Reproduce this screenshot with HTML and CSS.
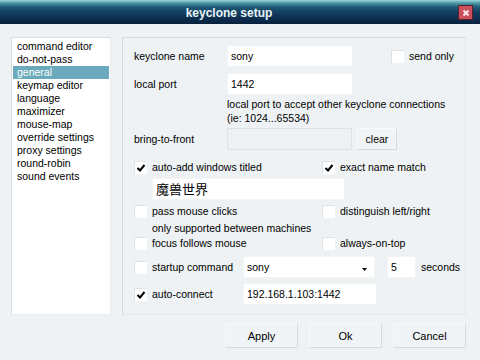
FILE: index.html
```html
<!DOCTYPE html>
<html>
<head>
<meta charset="utf-8">
<link rel="stylesheet" href="styles.css">
</head>
<body>
<div class="window">
  <div class="titlebar">
    <div class="title">keyclone setup</div>
    <div class="close"><svg width="8" height="8" viewBox="0 0 8 8"><path d="M1.5 1.5 L6.5 6.5 M6.5 1.5 L1.5 6.5" stroke="#ffe8ea" stroke-width="2"/></svg></div>
  </div>
  <div class="content">
    <div class="main">
      <ul class="list">
        <li>command editor</li>
        <li>do-not-pass</li>
        <li class="sel">general</li>
        <li>keymap editor</li>
        <li>language</li>
        <li>maximizer</li>
        <li>mouse-map</li>
        <li>override settings</li>
        <li>proxy settings</li>
        <li>round-robin</li>
        <li>sound events</li>
      </ul>
      <div class="panel">
        <div class="row r-name">
          <span class="label">keyclone name</span>
          <span class="input w126">sony</span>
          <span class="cb ml38"></span><span class="cbtext">send only</span>
        </div>
        <div class="row r-port">
          <span class="label">local port</span>
          <span class="input w126">1442</span>
        </div>
        <div class="help">local port to accept other keyclone connections<br>(ie: 1024...65534)</div>
        <div class="row r-front">
          <span class="label">bring-to-front</span>
          <span class="input disabled w125"></span>
          <span class="btn small">clear</span>
        </div>
        <div class="crow r-auto">
          <span class="half"><span class="cb"><svg class="tick" viewBox="0 0 10 10"><path d="M1.5 5 L4 7.5 L8.5 2" fill="none" stroke="#000" stroke-width="2"/></svg></span><span class="cbtext">auto-add windows titled</span></span>
          <span class="half2"><span class="cb"><svg class="tick" viewBox="0 0 10 10"><path d="M1.5 5 L4 7.5 L8.5 2" fill="none" stroke="#000" stroke-width="2"/></svg></span><span class="cbtext">exact name match</span></span>
        </div>
        <div class="row r-title">
          <span class="input wtitle">魔兽世界</span>
        </div>
        <div class="crow r-pass">
          <span class="half"><span class="cb"></span><span class="cbtext">pass mouse clicks</span></span>
          <span class="half2"><span class="cb"></span><span class="cbtext">distinguish left/right</span></span>
        </div>
        <div class="note">only supported between machines</div>
        <div class="crow r-focus">
          <span class="half"><span class="cb"></span><span class="cbtext">focus follows mouse</span></span>
          <span class="half2"><span class="cb"></span><span class="cbtext">always-on-top</span></span>
        </div>
        <div class="row r-startup">
          <span class="clabel"><span class="cb"></span><span class="cbtext">startup command</span></span>
          <span class="input select">sony<svg class="arrow" width="5" height="3" viewBox="0 0 5 3"><path d="M0 0 H5 L2.5 3 Z" fill="#000"/></svg></span>
          <span class="input secs">5</span>
          <span class="unit">seconds</span>
        </div>
        <div class="row r-connect">
          <span class="clabel"><span class="cb"><svg class="tick" viewBox="0 0 10 10"><path d="M1.5 5 L4 7.5 L8.5 2" fill="none" stroke="#000" stroke-width="2"/></svg></span><span class="cbtext">auto-connect</span></span>
          <span class="input addr">192.168.1.103:1442</span>
        </div>
      </div>
    </div>
    <div class="buttons">
      <span class="btn big">Apply</span>
      <span class="btn big">Ok</span>
      <span class="btn big">Cancel</span>
    </div>
  </div>
</div>
</body>
</html>
```
FILE: styles.css
```css
* { box-sizing: border-box; }
html, body { margin: 0; padding: 0; }
body {
  width: 480px; height: 360px; overflow: hidden;
  font-family: "Liberation Sans", Arial, sans-serif;
  font-size: 10.5px; color: #000;
  background: #eef2f4;
}
.window { width: 480px; height: 360px; display: flex; flex-direction: column; background: #eef2f4; overflow: hidden; }
.titlebar {
  height: 24px; display: flex; align-items: center; flex: none;
  background: linear-gradient(to bottom, #9ad8dc 0px, #4f99a8 3px, #1f5a76 7px, #133f60 12px, #0c2a4a 20px, #07203c 24px);
}
.title { flex: 1; text-align: center; color: #e8f4f6; font-weight: bold; font-size: 12px; padding-top: 1px; }
.close {
  width: 15px; height: 15px; margin-right: 7px; margin-top: 1px;
  background: #c9505c; border: 1px solid #5a1f2a;
  display: flex; align-items: center; justify-content: center;
}
.content { flex: 1; padding: 13px 14px 0 11px; display: flex; flex-direction: column; }
.main { display: flex; gap: 11px; height: 278px; flex: none; }
.list {
  list-style: none; margin: 0; padding: 2px 1px; width: 100px; flex: none;
  background: #fff; border: 1px solid #d6dce0; border-right-color: #e8ecee; border-bottom-color: #e8ecee;
}
.list li { height: 13px; line-height: 13px; padding-left: 4px; white-space: nowrap; }
.list li.sel { background: #6aaabc; color: #fff; }
.panel {
  flex: 1; min-width: 0; border: 1px solid #d3d9dd; border-right-color: #e4e8ea; border-bottom-color: #e4e8ea;
  padding: 7px 0 0 11px; display: flex; flex-direction: column;
}
.row { display: flex; align-items: center; height: 22px; flex: none; }
.label { width: 93px; flex: none; }
.input {
  height: 22px; background: #fff; padding: 3px 3px 0; line-height: 14px; flex: none;
  border: 1px solid #f2f5f6;
}
.w126 { width: 126px; }
.w125 { width: 125px; }
.disabled { background: #eef1f3; border: 1px solid #dde2e5; }
.cb {
  width: 13px; height: 13px; background: #fff; flex: none;
  border-top: 1px solid #dde2e5; border-left: 1px solid #dde2e5;
  display: inline-flex; align-items: center; justify-content: center;
}
.tick { width: 10px; height: 10px; }
.cbtext { margin-left: 5px; white-space: nowrap; }
.ml38 { margin-left: 38px; }
.r-port { margin-top: 6px; }
.help { margin-left: 93px; line-height: 14px; margin-top: 2px; height: 29px; flex: none; }
.r-front { margin-top: 2px; }
.btn {
  display: inline-flex; align-items: center; justify-content: center; flex: none;
  background: #f1f4f6; border: 1px solid #d5dadd; border-top-color: #f7f9fa; border-left-color: #f7f9fa;
}
.btn.small { width: 40px; height: 22px; margin-left: 5px; }
.crow { display: flex; align-items: center; height: 14px; flex: none; }
.half { display: flex; align-items: center; width: 188px; flex: none; }
.half2 { display: flex; align-items: center; }
.r-auto { margin-top: 10px; }
.r-title { margin-top: 4px; padding-left: 18px; }
.wtitle { width: 193px; font-family: "Noto Sans CJK SC", "Liberation Sans", sans-serif; font-size: 13px; padding-top: 1px; line-height: 18px; }
.r-pass { margin-top: 4px; }
.note { margin-left: 18px; height: 16px; line-height: 16px; margin-top: 2px; flex: none; }
.r-startup { margin-top: 6px; }
.clabel { display: flex; align-items: center; width: 109px; flex: none; }
.select { width: 132px; position: relative; padding-left: 3px; }
.arrow { position: absolute; right: 7px; top: 11px; }
.secs { width: 29px; margin-left: 12px; }
.unit { margin-left: 5px; }
.r-connect { margin-top: 5px; }
.addr { width: 134px; }
.buttons { display: flex; justify-content: flex-end; gap: 11px; margin-top: 8px; }
.btn.big { width: 73px; height: 25px; font-size: 11px; }
```
